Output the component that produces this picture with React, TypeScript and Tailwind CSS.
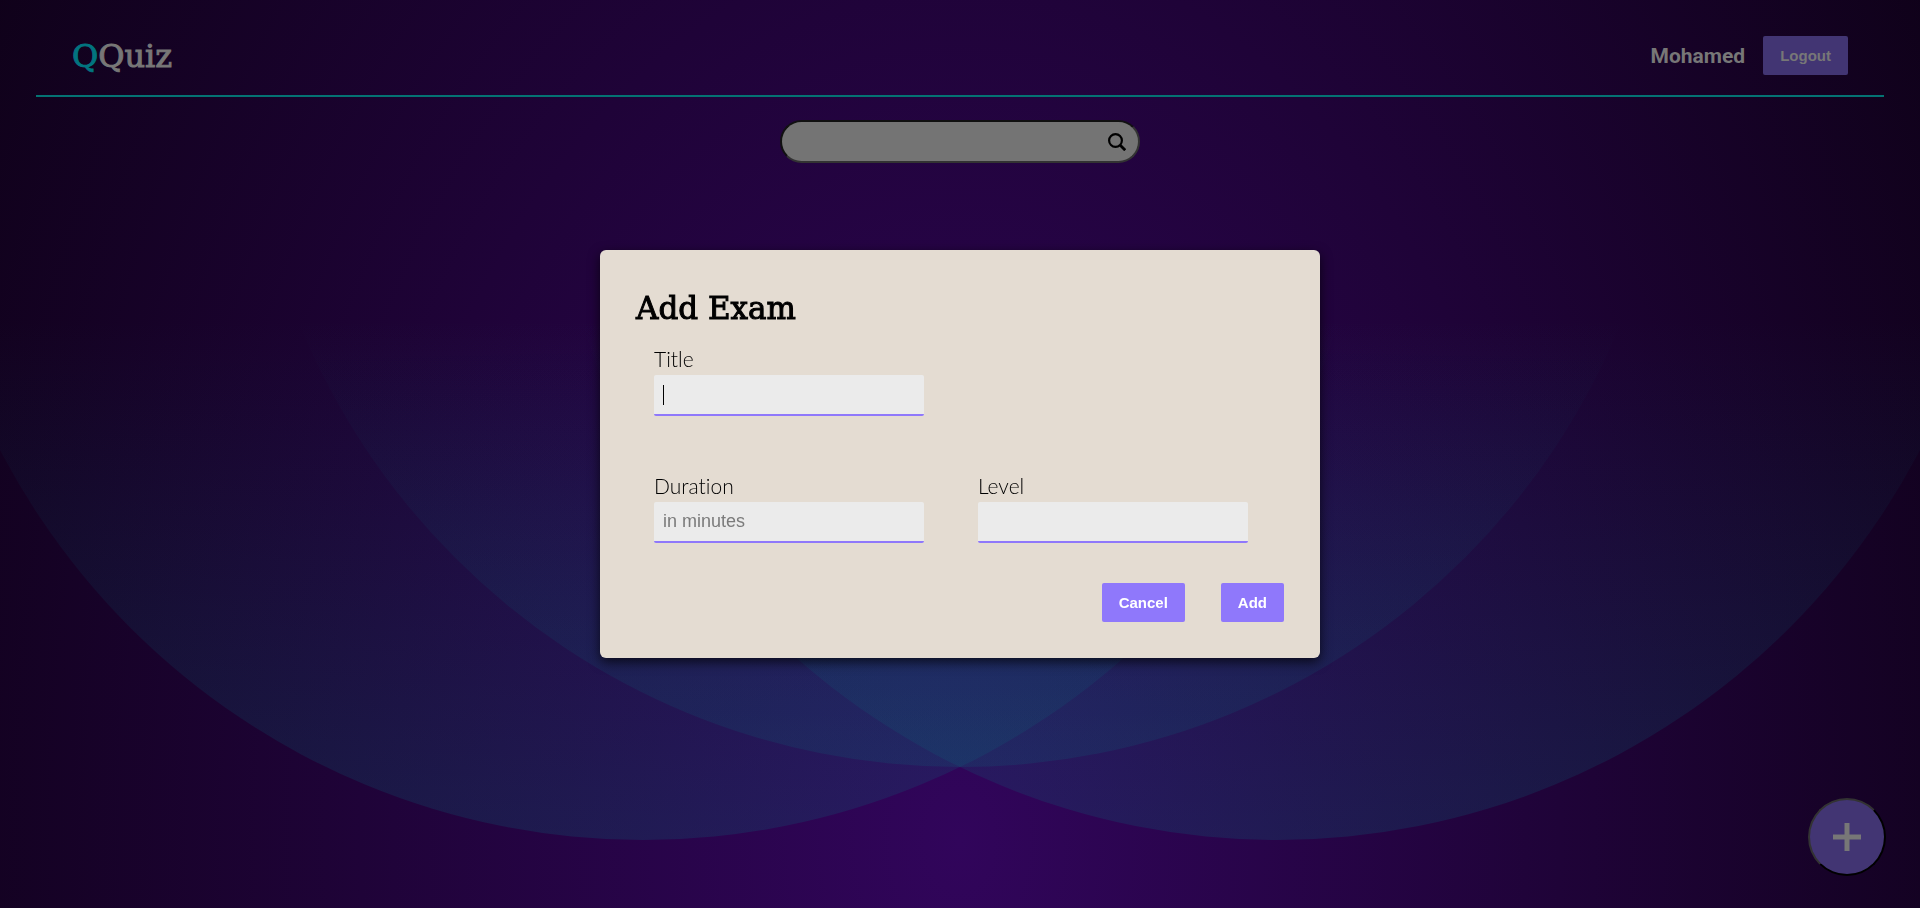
function Backdrop() {
  return (
    <svg
      aria-hidden="true"
      className="absolute inset-0 h-full w-full"
      viewBox="0 0 1920 908"
      preserveAspectRatio="xMidYMid slice"
    >
      <defs>
        <radialGradient
          id="glow"
          gradientUnits="userSpaceOnUse"
          cx="0"
          cy="0"
          r="1"
          gradientTransform="translate(960 841) scale(1200 1800)"
        >
          <stop offset="0" stopColor="#31055b" />
          <stop offset="1" stopColor="#0d0115" />
        </radialGradient>
        <linearGradient id="petal" gradientUnits="userSpaceOnUse" x1="0" y1="320" x2="0" y2="841">
          <stop offset="0" stopColor="#0a6478" stopOpacity="0" />
          <stop offset="1" stopColor="#0a6478" stopOpacity="0.24" />
        </linearGradient>
      </defs>
      <rect width="1920" height="908" fill="url(#glow)" />
      <g fill="url(#petal)">
        <circle cx="643" cy="115" r="725" />
        <circle cx="1277" cy="115" r="725" />
        <circle cx="960" cy="53" r="714" />
      </g>
    </svg>
  );
}

function SearchIcon() {
  return (
    <svg viewBox="0 0 18 18" className="size-[18px]" fill="none" stroke="black" aria-hidden="true">
      <circle cx="7.5" cy="7.5" r="6.4" strokeWidth="2.2" />
      <path d="M12 12L17.2 17.2" strokeWidth="2.8" />
    </svg>
  );
}

type FieldProps = { id: string; label: string; placeholder?: string; active?: boolean };

function Field({ id, label, placeholder, active }: FieldProps) {
  return (
    <div className="flex flex-col px-[18px]">
      <label
        htmlFor={id}
        className="pb-[4px] font-[Lato,sans-serif] text-[21px] leading-[24px] font-light [font-variant-ligatures:none]"
      >
        {label}
      </label>
      <div className="relative w-[270px] max-w-full">
        <input
          id={id}
          type="text"
          placeholder={placeholder}
          autoFocus={active}
          className="block h-[41px] w-full rounded-[2px] border-b-2 border-[#8f78fb] bg-[#ebebeb] px-[9px] text-[18px] caret-transparent outline-none placeholder:text-[#7b7b7b]"
        />
        {active && <span aria-hidden="true" className="absolute top-[10px] left-[9px] h-[20px] w-px bg-black" />}
      </div>
    </div>
  );
}

const button = "h-[39px] rounded-[2px] px-[17px] pt-px text-[15px] font-bold";

export default function App() {
  return (
    <div className="relative min-h-screen overflow-hidden bg-[#12021f] font-['Liberation_Sans',Arial,sans-serif]">
      <Backdrop />
      <div className="relative">
        <header className="mx-[36px] flex items-center justify-between border-b-2 border-[#047373] px-[36px] pt-[36px] pb-[20px]">
          <h1 className="pt-[2px] font-['DejaVu_Serif',serif] text-[32px] leading-[37px] text-[#777777] [-webkit-text-stroke:1px]">
            <span className="text-[#02747f]">Q</span>Quiz
          </h1>
          <div className="flex items-center gap-[18px]">
            <span className="font-[Roboto,sans-serif] text-[21px] leading-[28px] font-bold text-[#777777]">Mohamed</span>
            <button type="button" className={`${button} bg-[#423573] text-[#777777]`}>Logout</button>
          </div>
        </header>
        <form role="search" className="mx-auto mt-[23px] flex h-[43px] w-[360px] items-center rounded-full border-2 border-t-[#111111] border-r-[#333333] border-b-[#333333] border-l-[#111111] bg-[#747474] pr-[12px] pl-[18px]">
          <input type="search" aria-label="Search exams" className="min-w-0 flex-1 bg-transparent text-[18px] outline-none" />
          <button type="submit" aria-label="Search">
            <SearchIcon />
          </button>
        </form>
      </div>
      <button
        type="button"
        aria-label="Add exam"
        className="fixed right-[34px] bottom-[32px] flex size-[78px] items-center justify-center rounded-full border-2 border-t-[#333333] border-r-black border-b-black border-l-[#333333] bg-[#423573]"
      >
        <svg viewBox="0 0 28 28" className="size-[28px]" aria-hidden="true">
          <path d="M14 0V28M0 14H28" stroke="#777777" strokeWidth="5" />
        </svg>
      </button>
      <div className="fixed inset-0 flex items-center justify-center">
        <div role="dialog" aria-labelledby="dialog-title" className="w-[720px] max-w-full rounded-[6px] bg-[#e4dcd2] p-[36px] text-black shadow-[0_4px_12px_rgba(0,0,0,0.7)]">
          <h2 id="dialog-title" className="font-['DejaVu_Serif',serif] text-[31px] leading-[44px] [-webkit-text-stroke:1px]">
            Add Exam
          </h2>
          <form>
            <div className="mt-[17px] grid grid-cols-2 gap-y-[58px]">
              <div className="col-span-2">
                <Field id="title" label="Title" active />
              </div>
              <Field id="duration" label="Duration" placeholder="in minutes" />
              <Field id="level" label="Level" />
            </div>
            <div className="mt-[40px] flex justify-end gap-[36px]">
              <button type="button" className={`${button} bg-[#8f78fb] text-white`}>Cancel</button>
              <button type="submit" className={`${button} bg-[#8f78fb] text-white`}>Add</button>
            </div>
          </form>
        </div>
      </div>
    </div>
  );
}
